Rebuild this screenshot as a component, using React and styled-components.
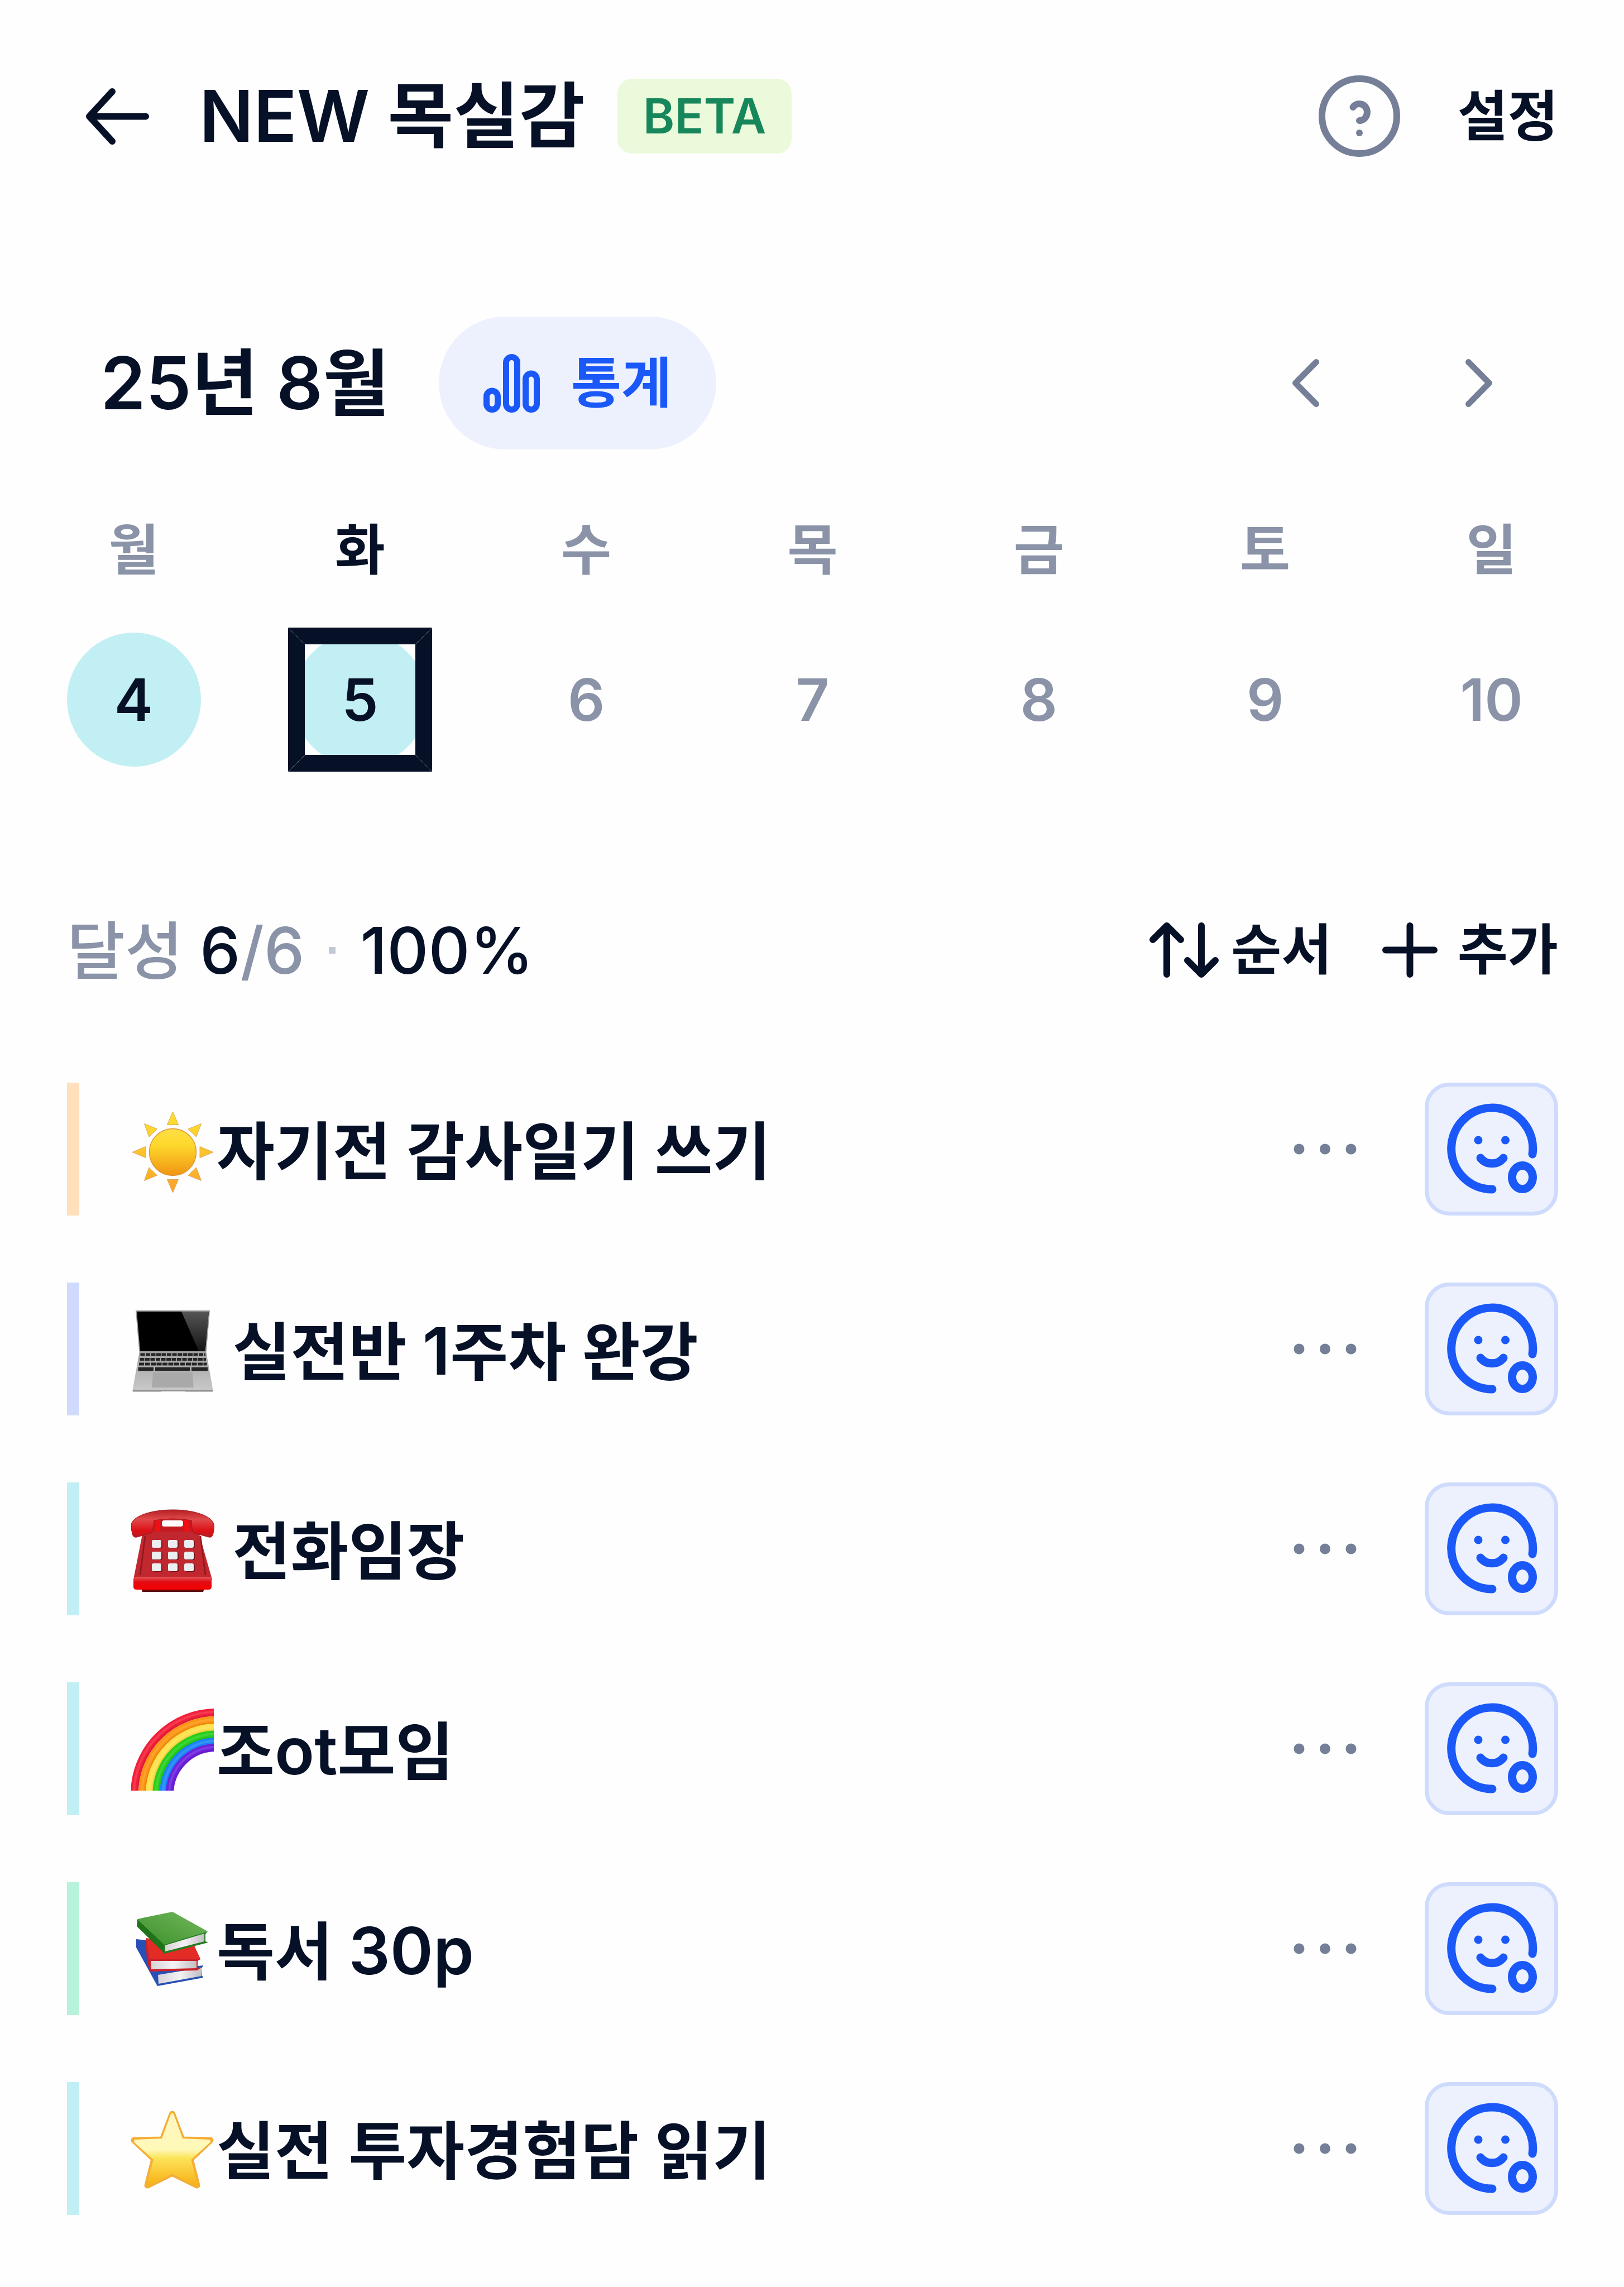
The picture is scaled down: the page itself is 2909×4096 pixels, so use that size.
import React, { useState } from "react";
import styled, { createGlobalStyle } from "styled-components";

const GlobalStyle = createGlobalStyle`
  * {
    box-sizing: border-box;
  }
  body {
    margin: 0;
    background-color: #fefefe;
    color: #061127;
    font-family: "Inter", "Noto Sans CJK KR", sans-serif;
  }
  button {
    display: flex;
    align-items: center;
    justify-content: center;
    padding: 0;
    border: 0;
    background: none;
    color: inherit;
    font-family: inherit;
    cursor: pointer;
  }
  h1, h2, p, ul {
    margin: 0;
    padding: 0;
    font-weight: inherit;
  }
  svg {
    display: block;
    flex: 0 0 auto;
  }
`;

const Header = styled.header`
  display: flex;
  align-items: center;
  justify-content: space-between;
  padding: 135px 118px 135px 120px;
`;

const HeaderSide = styled.div`
  display: flex;
  align-items: center;
  gap: ${(props) => props.$gap}px;
  height: 146px;
`;

const BackButton = styled.button`
  width: 179px;
  height: 146px;
`;

const HelpButton = styled.button`
  color: #757f97;
`;

const Title = styled.h1`
  font-size: 128px;
  font-weight: 600;
  line-height: 146px;
  white-space: nowrap;
`;

const Latin = styled.span`
  font-size: ${(props) => props.$size}px;
`;

const Badge = styled.span`
  padding: 0 46px;
  border-radius: 26px;
  background-color: #ebfada;
  color: #17865b;
  font-size: 86px;
  font-weight: 600;
  line-height: 134px;
`;

const TextButton = styled.button`
  gap: ${(props) => props.$gap || 0}px;
  font-size: 98px;
  font-weight: 600;
  line-height: 146px;
  white-space: nowrap;
`;

const Main = styled.main`
  padding: 151px 118px 129px 120px;
`;

const MonthRow = styled.div`
  display: flex;
  align-items: center;
  height: 238px;
  padding: 0 82px 0 60px;
`;

const Month = styled.h2`
  margin-right: 88px;
  font-size: 130px;
  font-weight: 600;
  line-height: 146px;
  white-space: nowrap;
`;

const StatButton = styled(TextButton)`
  height: 238px;
  padding: 0 80px;
  border-radius: 119px;
  background-color: #edf1fe;
  color: #1b58f8;
`;

const MonthNav = styled.div`
  display: flex;
  gap: 191px;
  margin-left: auto;
  color: #757f97;

  button {
    width: 120px;
    height: 120px;
  }
`;

const Week = styled.div`
  display: flex;
  justify-content: space-between;
  margin-top: 120px;
`;

const Day = styled.button`
  flex-direction: column;
  gap: 88px;
  width: 239px;
  color: ${(props) => (props.$active ? "#061127" : "#8a93a7")};
`;

const DayName = styled.span`
  font-size: 98px;
  font-weight: 600;
  line-height: 120px;
`;

const DayNumber = styled.span`
  position: relative;
  display: flex;
  align-items: center;
  justify-content: center;
  width: 240px;
  height: 240px;
  border-radius: 50%;
  background-color: ${(props) => (props.$done ? "#c2eff4" : "transparent")};
  color: ${(props) => (props.$done ? "#061127" : "#8a93a7")};
  font-size: 104px;
  font-weight: 600;

  svg {
    position: absolute;
    top: -9px;
    left: -9px;
  }
`;

const Summary = styled.div`
  display: flex;
  align-items: center;
  justify-content: space-between;
  height: 140px;
  margin-top: 258px;
`;

const Achieved = styled.p`
  padding-top: 4px;
  color: #8a93a7;
  font-size: 113px;
  font-weight: 500;
  line-height: 140px;
  white-space: nowrap;

  strong {
    color: #061127;
    font-weight: 500;
  }
  i {
    display: inline-block;
    width: 12px;
    height: 12px;
    margin: 0 44px;
    background-color: #c2c8d3;
    vertical-align: 36px;
  }
`;

const Tools = styled.div`
  display: flex;
  gap: 90px;

  button {
    line-height: 140px;
  }
`;

const TaskList = styled.ul`
  display: flex;
  flex-direction: column;
  gap: 120px;
  margin-top: 168px;
  list-style: none;
`;

const Task = styled.li`
  display: flex;
  align-items: center;
  height: 238px;
`;

const ColorBar = styled.span`
  align-self: stretch;
  width: 22px;
  margin-right: 93px;
  background-color: ${(props) => props.$color};
`;

const TaskName = styled.span`
  flex: 1;
  padding: 8px 0 0 3px;
  font-size: 113px;
  font-weight: 600;
  line-height: 146px;
  white-space: pre;
`;

const MoreButton = styled.button`
  height: 120px;
  margin-right: 122px;
  color: #757f97;
`;

const StatusButton = styled.button`
  width: 239px;
  height: 238px;
  border: 7px solid #cfdbfc;
  border-radius: 44px;
  background-color: #edf1fe;
  color: #1b58f8;
`;

const stroke = {
  fill: "none",
  stroke: "currentColor",
  strokeLinecap: "round",
  strokeLinejoin: "round",
};

const BackIcon = () => (
  <svg width="115" height="101" viewBox="0 0 115 101" {...stroke} strokeWidth="12">
    <path d="M49 6 8 50.5 49 95M8 50.5H109" />
  </svg>
);

const HelpIcon = () => (
  <svg width="146" height="146" viewBox="-73 -73 146 146" {...stroke} strokeWidth="12">
    <circle r="67" />
    <path d="M-11.5-16C-9-20-4-22 0-22 8-22 14-15 14-7.500 14 1 8 8 0 8" />
    <circle cy="30" r="6" fill="currentColor" stroke="none" />
  </svg>
);

const ChartIcon = () => (
  <svg width="101" height="105" viewBox="0 0 101 105" {...stroke} strokeWidth="11">
    <rect x="5.500" y="66" width="20" height="33.500" rx="10" />
    <rect x="40.500" y="5.500" width="20" height="94" rx="10" />
    <rect x="75.500" y="35" width="20" height="64.500" rx="10" />
  </svg>
);

const PrevIcon = () => (
  <svg width="49" height="86" viewBox="0 0 49 86" {...stroke} strokeWidth="11">
    <path d="M43.500 5.500 6.500 43l37 37.500" />
  </svg>
);

const NextIcon = () => (
  <svg width="49" height="86" viewBox="0 0 49 86" {...stroke} strokeWidth="11">
    <path d="m5.500 5.500 37 37.500-37 37.500" />
  </svg>
);

const SortIcon = () => (
  <svg width="124" height="99" viewBox="0 0 124 99" {...stroke} strokeWidth="12">
    <path d="M31 93V6M6 31 31 6l25 25M93 6v87M68 68l25 25 25-25" />
  </svg>
);

const PlusIcon = () => (
  <svg width="99" height="99" viewBox="0 0 99 99" {...stroke} strokeWidth="12">
    <path d="M49.500 6v87M6 49.500h87" />
  </svg>
);

const DotsIcon = () => (
  <svg width="113" height="20" viewBox="0 0 113 20" fill="currentColor">
    <circle cx="10" cy="10" r="9.500" />
    <circle cx="56.500" cy="10" r="9.500" />
    <circle cx="103" cy="10" r="9.500" />
  </svg>
);

const SmileIcon = () => (
  <svg width="164" height="164" viewBox="37 37 164 164" {...stroke} strokeWidth="15">
    <path d="M192 128A73 73 0 1 0 120 191" />
    <path d="M99 135c10 13 31 13 41 0" />
    <circle cx="95" cy="103" r="7.500" fill="currentColor" stroke="none" />
    <circle cx="143.500" cy="103" r="7.500" fill="currentColor" stroke="none" />
    <ellipse cx="174" cy="169.500" rx="18.500" ry="21" />
  </svg>
);

// square marker drawn over today's circle
const TodayFrame = () => (
  <svg width="258" height="258" viewBox="0 0 258 258">
    <path d="M0 0H258V258H0ZM30 30V228H228V30Z" fill="#061127" fillRule="evenodd" />
    <path
      d="M0 0 30 30M258 0 228 30M0 258 30 228M258 258 228 228"
      stroke="#6f7685"
      strokeWidth="1"
    />
  </svg>
);

const EmojiSvg = ({ children }) => (
  <svg width="150" height="162" viewBox="0 -6 150 162" aria-hidden="true">
    {children}
  </svg>
);

const Sun = () => (
  <EmojiSvg>
    <defs>
      <linearGradient id="sunFill" x1="0" y1="0" x2="0" y2="1">
        <stop offset="0" stopColor="#fde044" />
        <stop offset="0.35" stopColor="#fed82c" />
        <stop offset="1" stopColor="#f09412" />
      </linearGradient>
      <linearGradient id="rayFill" gradientUnits="userSpaceOnUse" x1="0" y1="8" x2="0" y2="153">
        <stop offset="0" stopColor="#fde32f" />
        <stop offset="1" stopColor="#faa22b" />
      </linearGradient>
    </defs>
    <circle cx="74.500" cy="80.500" r="42" fill="url(#sunFill)" stroke="#e0942f" strokeWidth="1.500" />
    <path
      d="M74.500 8 84.500 31.500H64.500ZM125.500 29.500 116.500 53 102 39ZM147 80.500 123 90.500V70.500ZM125.500 131.500 102 122 116.500 108ZM74.500 153 64.500 129.500H84.500ZM23.500 131.500 32 108 46.500 122ZM2 80.500 26 70.500V90.500ZM23.500 29.500 46.500 39 32 53Z"
      fill="url(#rayFill)"
      stroke="#dca55a"
      strokeWidth="1"
      strokeLinejoin="round"
    />
  </EmojiSvg>
);

const Laptop = () => (
  <EmojiSvg>
    <defs>
      <linearGradient id="glare" x1="0" y1="0" x2="0" y2="1">
        <stop offset="0" stopColor="#555" />
        <stop offset="1" stopColor="#151515" />
      </linearGradient>
      <linearGradient id="deck" x1="0" y1="0" x2="0" y2="1">
        <stop offset="0" stopColor="#a2a2a2" />
        <stop offset="1" stopColor="#cacaca" />
      </linearGradient>
    </defs>
    <path d="M8 6H141L134.500 81H14.500Z" fill="#9b9b9b" />
    <path d="M10 8H139L132.500 79H16Z" fill="#000" />
    <path d="M90 8H139L132.500 79H121Z" fill="url(#glare)" />
    <path d="M14.500 81H134.500L146.500 149Q147 152 144 152H98L94 150H57L53 152H5Q2 152 2.500 149Z" fill="url(#deck)" />
    <g stroke="#252525" strokeWidth="5">
      <path d="M16.500 85H133" strokeDasharray="8 1.500" />
      <path d="M15.500 93.500H134" strokeDasharray="8 1.500" />
      <path d="M14 102H135.500" strokeDasharray="9 1.500" />
      <path d="M12.500 111H40M43 111H105M108 111H137" strokeWidth="6.500" />
    </g>
    <path d="M39 117H110L111.500 144H37Z" fill="#a9a9a9" />
    <path d="M2.500 150H147" stroke="#8d8d8d" strokeWidth="2" />
  </EmojiSvg>
);

const Phone = () => (
  <EmojiSvg>
    <defs>
      <linearGradient id="handset" x1="0" y1="0" x2="0" y2="1">
        <stop offset="0" stopColor="#b51f25" />
        <stop offset="0.35" stopColor="#e04a4c" />
        <stop offset="0.75" stopColor="#dd1118" />
        <stop offset="1" stopColor="#b81a20" />
      </linearGradient>
      <linearGradient id="phoneBase" x1="0" y1="0" x2="0" y2="1">
        <stop offset="0" stopColor="#e2595c" />
        <stop offset="0.4" stopColor="#e30b12" />
        <stop offset="1" stopColor="#f40000" />
      </linearGradient>
    </defs>
    <path d="M18 146H131L129 152H20Z" fill="#5d0c10" />
    <path d="M37 20H112V50H37Z" fill="#c41b22" />
    <path d="M44 22H52V44H44ZM95 22H104V44H95Z" fill="#f01014" />
    <path d="M28 47Q30 44 36 44H113Q120 44 122 49L145 130H4L20 49Z" fill="#c1272f" />
    <path d="M25 52 16 122M124 52 133 122" stroke="#8f171d" strokeWidth="2.500" />
    <path d="M8 125H141Q144 126 144 130V143Q144 148 138 148H10Q4 148 4 143V130Q4 126 8 125Z" fill="url(#phoneBase)" />
    <path
      d="M0 31C4 15 38 5 74.500 5S144 15 148 31C149 38 148 46 145 52Q143 55 139 54L113 47Q109 46 109 38L108 24Q75 18 41 24L39 38Q38 46 35 47L10 54Q5 55 3 51 0 43 0 31Z"
      fill="url(#handset)"
      stroke="#a5161c"
      strokeWidth="1"
    />
    <rect x="55" y="24" width="38" height="11" rx="4" fill="#fefefe" />
    {[59, 80, 101].map((y) =>
      [37, 66, 95].map((x) => (
        <g key={`${x}-${y}`}>
          <rect x={x + 2} y={y + 1} width="17" height="14" rx="3" fill="#741318" />
          <rect x={x} y={y} width="17" height="14" rx="3" fill="#eceff0" />
        </g>
      ))
    )}
  </EmojiSvg>
);

const rainbowBands = [
  { r: 146, color: "#f3203a" },
  { r: 132, color: "#fd9412" },
  { r: 119, color: "#fee04a" },
  { r: 106.5, color: "#27cf1c" },
  { r: 94, color: "#1b84fb" },
  { r: 83, color: "#6d22dd" },
];

const Rainbow = () => (
  <EmojiSvg>
    <defs>
      <clipPath id="rainbowClip">
        <path d="M-4 0H148V150H-4Z" />
      </clipPath>
    </defs>
    <g clipPath="url(#rainbowClip)" fill="none">
      {rainbowBands.map((band) => (
        <g key={band.color} stroke={band.color}>
          <circle cx="152" cy="156" r={band.r} strokeWidth="14" />
          <circle cx="152" cy="156" r={band.r - 5} strokeWidth="3" stroke="#000" opacity="0.08" />
          <circle cx="152" cy="156" r={band.r + 1} strokeWidth="4" stroke="#fff" opacity="0.12" />
        </g>
      ))}
    </g>
  </EmojiSvg>
);

const Books = () => (
  <EmojiSvg>
    <defs>
      <linearGradient id="bookCover" x1="0" y1="1" x2="1" y2="0">
        <stop offset="0" stopColor="#3b8f2b" />
        <stop offset="1" stopColor="#74b95c" />
      </linearGradient>
      <linearGradient id="bookPages" x1="0" y1="0" x2="1" y2="0">
        <stop offset="0" stopColor="#d7d3d7" />
        <stop offset="0.5" stopColor="#f4f2f4" />
        <stop offset="1" stopColor="#c2bfc2" />
      </linearGradient>
    </defs>
    <path d="M9 58 28 60 38 116 129 105 126 111 127 123 129 127 47 142 9 73Z" fill="#2650b5" />
    <path d="M48 122 126 109V124L49 138Z" fill="url(#bookPages)" />
    <path d="M26 56 113 70 124 94 119 97V109L124 110 118 114 34 116 28 96Z" fill="#c9212a" />
    <path d="M27 57 113 70 124 94H33Z" fill="#e32c25" />
    <path d="M35 97H117V110L36 112Z" fill="url(#bookPages)" />
    <path d="M11 22 59 67V83L10 35Z" fill="#1f731b" />
    <path d="M59 67 137 44 133 49V62L138 64 59 84Z" fill="#257c20" />
    <path d="M61 69 131 48V62L61 80Z" fill="url(#bookPages)" />
    <path d="M11 22 74 9 137 44 59 68Z" fill="url(#bookCover)" />
  </EmojiSvg>
);

const Star = () => (
  <EmojiSvg>
    <defs>
      <linearGradient id="starFill" x1="0" y1="0" x2="0" y2="1">
        <stop offset="0" stopColor="#fff5c0" />
        <stop offset="0.5" stopColor="#fff9b8" />
        <stop offset="0.62" stopColor="#fce45a" />
        <stop offset="1" stopColor="#f8b218" />
      </linearGradient>
    </defs>
    <path
      d="M73.500 13 91 59 142 60 106 94 118 141 73.500 119 29 141 41 94 5 60 56 59Z"
      fill="#f4ad35"
      stroke="#f4ad35"
      strokeWidth="11"
      strokeLinejoin="round"
    />
    <path
      d="M73.500 15 90 60 139 62 104 94 116 139 73.500 117 31 139 43 94 8 62 57 60Z"
      fill="url(#starFill)"
      stroke="url(#starFill)"
      strokeWidth="6"
      strokeLinejoin="round"
    />
  </EmojiSvg>
);

const days = [
  { name: "월", date: 4, done: true },
  { name: "화", date: 5, done: true },
  { name: "수", date: 6 },
  { name: "목", date: 7 },
  { name: "금", date: 8 },
  { name: "토", date: 9 },
  { name: "일", date: 10 },
];

const tasks = [
  { id: 1, color: "#ffe0bb", Emoji: Sun, name: "자기전 감사일기 쓰기" },
  {
    id: 2,
    color: "#cfdafd",
    Emoji: Laptop,
    name: (
      <>
        {" 실전반 "}
        <Latin $size={117}>1</Latin>주차 완강
      </>
    ),
  },
  { id: 3, color: "#c1eff5", Emoji: Phone, name: " 전화임장" },
  {
    id: 4,
    color: "#c1eff5",
    Emoji: Rainbow,
    name: (
      <>
        조<Latin $size={117}>ot</Latin>모임
      </>
    ),
  },
  {
    id: 5,
    color: "#b7f2da",
    Emoji: Books,
    name: (
      <>
        {"독서 "}
        <Latin $size={117}>30p</Latin>
      </>
    ),
  },
  { id: 6, color: "#c1eff5", Emoji: Star, name: "실전 투자경험담 읽기" },
];

const App = () => {
  const [selected, setSelected] = useState(5);

  return (
    <>
      <GlobalStyle />
      <Header>
        <HeaderSide $gap={58}>
          <BackButton aria-label="뒤로">
            <BackIcon />
          </BackButton>
          <Title>NEW 목실감</Title>
          <Badge>BETA</Badge>
        </HeaderSide>
        <HeaderSide $gap={103}>
          <HelpButton aria-label="도움말">
            <HelpIcon />
          </HelpButton>
          <TextButton>설정</TextButton>
        </HeaderSide>
      </Header>
      <Main>
        <MonthRow>
          <Month>25년 8월</Month>
          <StatButton $gap={56}>
            <ChartIcon />
            통계
          </StatButton>
          <MonthNav>
            <button aria-label="이전 주">
              <PrevIcon />
            </button>
            <button aria-label="다음 주">
              <NextIcon />
            </button>
          </MonthNav>
        </MonthRow>
        <Week>
          {days.map((day) => (
            <Day
              key={day.date}
              $active={day.date === selected}
              onClick={() => setSelected(day.date)}
            >
              <DayName>{day.name}</DayName>
              <DayNumber $done={day.done}>
                {day.date}
                {day.date === selected && <TodayFrame />}
              </DayNumber>
            </Day>
          ))}
        </Week>
        <Summary>
          <Achieved>
            달성{" "}
            <Latin $size={115}>
              <strong>6</strong>/6
            </Latin>
            <i />
            <Latin $size={115}>
              <strong>100%</strong>
            </Latin>
          </Achieved>
          <Tools>
            <TextButton $gap={22}>
              <SortIcon />
              순서
            </TextButton>
            <TextButton $gap={36}>
              <PlusIcon />
              추가
            </TextButton>
          </Tools>
        </Summary>
        <TaskList>
          {tasks.map(({ id, color, Emoji, name }) => (
            <Task key={id}>
              <ColorBar $color={color} />
              <Emoji />
              <TaskName>{name}</TaskName>
              <MoreButton aria-label="더보기">
                <DotsIcon />
              </MoreButton>
              <StatusButton aria-label="완료">
                <SmileIcon />
              </StatusButton>
            </Task>
          ))}
        </TaskList>
      </Main>
    </>
  );
};

export default App;
